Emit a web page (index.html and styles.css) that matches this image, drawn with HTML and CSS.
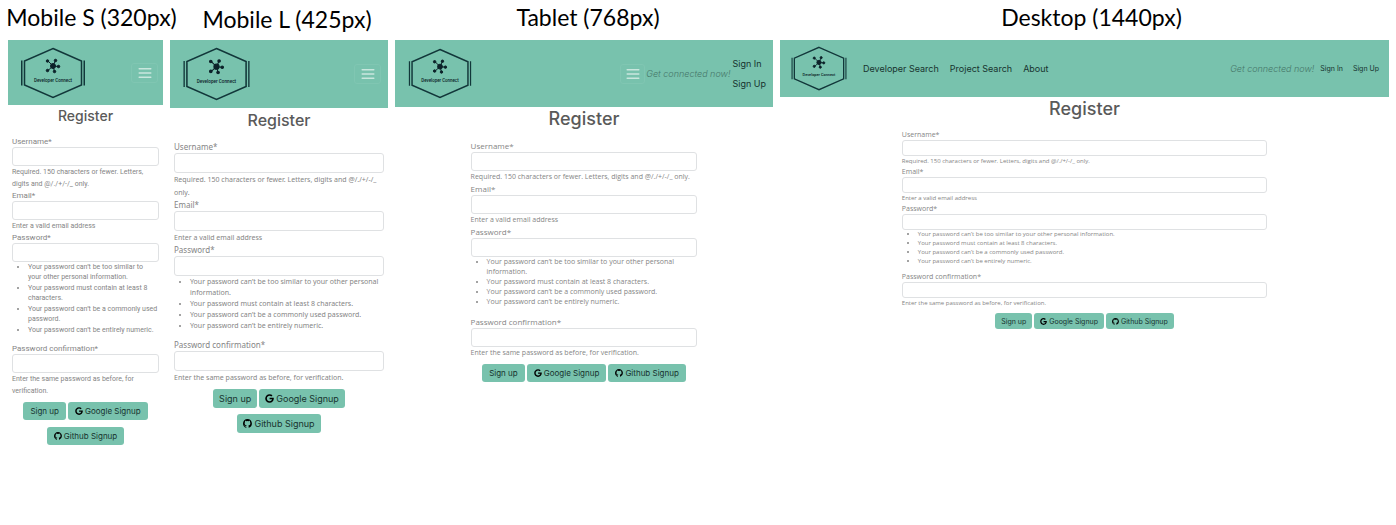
FILE: index.html
```html
<!DOCTYPE html>
<html lang="en">
<head>
<meta charset="utf-8">
<title>Developer Connect – Register</title>
<link rel="stylesheet" href="styles.css">
</head>
<body>
<svg class="defs" aria-hidden="true">
  <symbol id="logo" viewBox="0 0 128 104">
    <g fill="none" stroke="#12373a" stroke-width="3">
      <path d="M64 3 121 28V76L64 101 7 76V28Z"/>
      <path d="M1.500 27V77M126.500 27V77"/>
    </g>
    <g stroke="#0c2229" stroke-width="2" fill="#0c2229">
      <path d="M64 38 54 28M64 38 69 27M64 38 75 39M64 38 67 49M64 38 54 47"/>
      <circle cx="64" cy="38" r="5"/><circle cx="53" cy="28" r="2.500"/><circle cx="69" cy="27" r="2.500"/>
      <circle cx="75" cy="39" r="2.500"/><circle cx="67" cy="49" r="2.500"/><circle cx="53" cy="47" r="2.500"/>
    </g>
  </symbol>
  <symbol id="menu" viewBox="0 0 30 30">
    <path d="M4 7h22M4 15h22M4 23h22" fill="none" stroke="#fff" stroke-opacity=".6" stroke-width="2.500" stroke-linecap="round"/>
  </symbol>
  <symbol id="google" viewBox="0 0 488 512">
    <path d="M488 261.800C488 403.300 391.100 504 248 504 110.800 504 0 393.200 0 256S110.800 8 248 8c66.800 0 123 24.500 166.300 64.900l-67.500 64.900C258.500 52.600 94.300 116.600 94.300 256c0 86.500 69.100 156.600 153.700 156.600 98.200 0 135-70.400 140.800-106.900H248v-85.300h236.100c2.300 12.700 3.900 24.900 3.900 41.400z"/>
  </symbol>
  <symbol id="github" viewBox="0 0 16 16">
    <path d="M8 0C3.580 0 0 3.580 0 8c0 3.540 2.290 6.530 5.470 7.590.4.070.55-.17.55-.38v-1.600c-2.010.37-2.530-.49-2.690-.94-.09-.23-.48-.94-.82-1.130-.28-.15-.68-.52-.01-.53.63-.01 1.080.58 1.230.82.72 1.210 1.870.87 2.330.66.07-.52.28-.87.51-1.070-1.780-.2-3.640-.89-3.640-3.950 0-.87.31-1.590.82-2.150-.08-.2-.36-1.020.08-2.120 0 0 .67-.21 2.200.82a7.600 7.600 0 0 1 4 0c1.530-1.040 2.200-.82 2.200-.82.44 1.100.16 1.920.08 2.120.51.56.82 1.270.82 2.150 0 3.070-1.870 3.750-3.650 3.950.29.25.54.73.54 1.480v2.200c0 .21.15.46.55.38A8 8 0 0 0 8 0z"/>
  </symbol>
</svg>

<main class="board">
  <section class="view mobile-s">
    <h2 class="caption">Mobile S (320px)</h2>
    <nav class="nav">
      <a class="brand" href="#" aria-label="Developer Connect"><svg viewBox="0 0 128 104"><use href="#logo"/><text class="logo-text" x="64" y="70" text-anchor="middle">Developer Connect</text></svg></a>
      <button class="toggle" aria-label="Menu"><svg><use href="#menu"/></svg></button>
    </nav>
    <h1 class="title">Register</h1>
    <form class="form">
      <label for="s-user">Username*</label>
      <input id="s-user" type="text">
      <p>Required. 150 characters or fewer. Letters,<br>digits and @/./+/-/_ only.</p>
      <label for="s-mail">Email*</label>
      <input id="s-mail" type="email">
      <p>Enter a valid email address</p>
      <label for="s-pass">Password*</label>
      <input id="s-pass" type="password">
      <ul>
        <li>Your password can’t be too similar to<br>your other personal information.</li>
        <li>Your password must contain at least 8<br>characters.</li>
        <li>Your password can’t be a commonly used password.</li>
        <li>Your password can’t be entirely numeric.</li>
      </ul>
      <label for="s-conf">Password confirmation*</label>
      <input id="s-conf" type="password">
      <p>Enter the same password as before, for<br>verification.</p>
      <div class="actions">
        <button type="button">Sign up</button>
        <button type="button"><svg><use href="#google"/></svg>Google Signup</button>
        <button type="button"><svg><use href="#github"/></svg>Github Signup</button>
      </div>
    </form>
  </section>

  <section class="view mobile-l">
    <h2 class="caption">Mobile L (425px)</h2>
    <nav class="nav">
      <a class="brand" href="#" aria-label="Developer Connect"><svg viewBox="0 0 128 104"><use href="#logo"/><text class="logo-text" x="64" y="70" text-anchor="middle">Developer Connect</text></svg></a>
      <button class="toggle" aria-label="Menu"><svg><use href="#menu"/></svg></button>
    </nav>
    <h1 class="title">Register</h1>
    <form class="form">
      <label for="l-user">Username*</label>
      <input id="l-user" type="text">
      <p>Required. 150 characters or fewer. Letters, digits and @/./+/-/_ only.</p>
      <label for="l-mail">Email*</label>
      <input id="l-mail" type="email">
      <p>Enter a valid email address</p>
      <label for="l-pass">Password*</label>
      <input id="l-pass" type="password">
      <ul>
        <li>Your password can’t be too similar to your other personal information.</li>
        <li>Your password must contain at least 8 characters.</li>
        <li>Your password can’t be a commonly used password.</li>
        <li>Your password can’t be entirely numeric.</li>
      </ul>
      <label for="l-conf">Password confirmation*</label>
      <input id="l-conf" type="password">
      <p>Enter the same password as before, for verification.</p>
      <div class="actions">
        <button type="button">Sign up</button>
        <button type="button"><svg><use href="#google"/></svg>Google Signup</button>
        <button type="button"><svg><use href="#github"/></svg>Github Signup</button>
      </div>
    </form>
  </section>

  <section class="view tablet">
    <h2 class="caption">Tablet (768px)</h2>
    <nav class="nav">
      <a class="brand" href="#" aria-label="Developer Connect"><svg viewBox="0 0 128 104"><use href="#logo"/><text class="logo-text" x="64" y="70" text-anchor="middle">Developer Connect</text></svg></a>
      <button class="toggle" aria-label="Menu"><svg><use href="#menu"/></svg></button>
      <em class="tagline">Get connected now!</em>
      <div class="account"><a href="#">Sign In</a><a href="#">Sign Up</a></div>
    </nav>
    <h1 class="title">Register</h1>
    <form class="form">
      <label for="t-user">Username*</label>
      <input id="t-user" type="text">
      <p>Required. 150 characters or fewer. Letters, digits and @/./+/-/_ only.</p>
      <label for="t-mail">Email*</label>
      <input id="t-mail" type="email">
      <p>Enter a valid email address</p>
      <label for="t-pass">Password*</label>
      <input id="t-pass" type="password">
      <ul>
        <li>Your password can’t be too similar to your other personal information.</li>
        <li>Your password must contain at least 8 characters.</li>
        <li>Your password can’t be a commonly used password.</li>
        <li>Your password can’t be entirely numeric.</li>
      </ul>
      <label for="t-conf">Password confirmation*</label>
      <input id="t-conf" type="password">
      <p>Enter the same password as before, for verification.</p>
      <div class="actions">
        <button type="button">Sign up</button>
        <button type="button"><svg><use href="#google"/></svg>Google Signup</button>
        <button type="button"><svg><use href="#github"/></svg>Github Signup</button>
      </div>
    </form>
  </section>

  <section class="view desktop">
    <h2 class="caption">Desktop (1440px)</h2>
    <nav class="nav">
      <a class="brand" href="#" aria-label="Developer Connect"><svg viewBox="0 0 128 104"><use href="#logo"/><text class="logo-text" x="64" y="70" text-anchor="middle">Developer Connect</text></svg></a>
      <div class="links"><a href="#">Developer Search</a><a href="#">Project Search</a><a href="#">About</a></div>
      <em class="tagline">Get connected now!</em>
      <div class="account"><a href="#">Sign In</a><a href="#">Sign Up</a></div>
    </nav>
    <h1 class="title">Register</h1>
    <form class="form">
      <label for="d-user">Username*</label>
      <input id="d-user" type="text">
      <p>Required. 150 characters or fewer. Letters, digits and @/./+/-/_ only.</p>
      <label for="d-mail">Email*</label>
      <input id="d-mail" type="email">
      <p>Enter a valid email address</p>
      <label for="d-pass">Password*</label>
      <input id="d-pass" type="password">
      <ul>
        <li>Your password can’t be too similar to your other personal information.</li>
        <li>Your password must contain at least 8 characters.</li>
        <li>Your password can’t be a commonly used password.</li>
        <li>Your password can’t be entirely numeric.</li>
      </ul>
      <label for="d-conf">Password confirmation*</label>
      <input id="d-conf" type="password">
      <p>Enter the same password as before, for verification.</p>
      <div class="actions">
        <button type="button">Sign up</button>
        <button type="button"><svg><use href="#google"/></svg>Google Signup</button>
        <button type="button"><svg><use href="#github"/></svg>Github Signup</button>
      </div>
    </form>
  </section>
</main>
</body>
</html>
```
FILE: styles.css
```css
* { box-sizing: border-box; }
body { margin: 0; background: #fff; color: #858585; font-family: "Open Sans", sans-serif; }
h1, h2, p, ul { margin: 0; }
a { color: #17332d; text-decoration: none; }
.defs { position: absolute; width: 0; height: 0; }
.logo-text { font: 500 9px Roboto, sans-serif; fill: #0c2229; }

.board {
  display: grid;
  grid-template-columns: 155fr 218fr 378fr 609fr;
  gap: 7px;
  padding: 0 7px 0 8px;
}
.view { min-width: 0; }

.caption {
  height: 40px;
  color: #000;
  font: 400 23px/34px Lato, sans-serif;
  white-space: nowrap;
  display: flex;
  justify-content: center;
}

.nav {
  display: flex;
  align-items: center;
  height: var(--nav-h);
  padding: 0 5px 0 13px;
  background: #78c2ad;
  font-family: Inter, sans-serif;
  white-space: nowrap;
}
.brand { display: flex; margin-right: auto; }
.brand svg { width: var(--logo-w); height: var(--logo-h); }
.toggle {
  display: flex;
  align-items: center;
  justify-content: center;
  width: 27px;
  height: 20px;
  padding: 0;
  border: 1px solid #80c6b2;
  border-radius: 3px;
  background: none;
}
.toggle svg { width: 16px; height: 16px; }
.tagline { color: #47786b; font-weight: 300; }

.title {
  margin-top: 2px;
  color: #5a5a5a;
  font: 500 var(--title-size)/20px Inter, sans-serif;
  text-align: center;
}

.form {
  display: flex;
  flex-direction: column;
  width: var(--form-w);
  margin: var(--form-top) auto 0;
}
.form label { font-size: var(--label-size); line-height: var(--label-h); }
.form input {
  width: 100%;
  height: var(--input-h);
  padding: 0 4px;
  border: 1px solid #dfe1e3;
  border-radius: 3px;
  background: #fff;
  font: inherit;
  font-size: var(--label-size);
}
.form p { font-size: var(--help-size); line-height: var(--help-h); }
.form ul {
  margin-bottom: var(--list-gap);
  padding-left: 16px;
  font-size: var(--help-size);
  line-height: var(--item-h);
}

.actions {
  display: flex;
  flex-wrap: wrap;
  justify-content: center;
  gap: var(--row-gap) 2px;
  margin-top: 5px;
}
.actions button {
  display: flex;
  align-items: center;
  gap: 2px;
  height: var(--btn-h);
  padding: 0 var(--btn-pad);
  border: 0;
  border-radius: 3px;
  background: #78c2ad;
  color: #17332d;
  font: 400 var(--btn-size) Inter, sans-serif;
  white-space: nowrap;
}
.actions svg { width: var(--btn-size); height: var(--btn-size); fill: #000; overflow: visible; }

.mobile-s {
  --nav-h: 65px; --logo-w: 64px; --logo-h: 52px; --title-size: 14px;
  --form-w: calc(100% - 8px); --form-top: 10px;
  --label-size: 8px; --label-h: 11px; --input-h: 19px;
  --help-size: 7px; --help-h: 12px; --item-h: 10px; --list-gap: 7px;
  --btn-size: 8px; --btn-h: 18px; --btn-pad: 7px; --row-gap: 7px;
}
.mobile-s .form { font-family: Roboto, sans-serif; }
.mobile-s .caption { padding-left: 12px; }
.mobile-s .title { margin-top: 1px; }
.mobile-s li { margin-bottom: 1px; }

.mobile-l {
  --nav-h: 68px; --logo-w: 67px; --logo-h: 54px; --title-size: 16px;
  --form-w: calc(100% - 8px); --form-top: 11px;
  --label-size: 8px; --label-h: 12px; --input-h: 20px;
  --help-size: 7px; --help-h: 13px; --item-h: 11px; --list-gap: 8px;
  --btn-size: 9px; --btn-h: 19px; --btn-pad: 6px; --row-gap: 6px;
}
.mobile-l .form { font-family: "Noto Sans", sans-serif; }
.mobile-l .caption { padding-left: 16px; line-height: 38px; }
.mobile-l .nav { padding-right: 7px; }

.tablet {
  --nav-h: 67px; --logo-w: 64px; --logo-h: 51px; --title-size: 18px;
  --form-w: 60%; --form-top: 11px;
  --label-size: 8px; --label-h: 12px; --input-h: 19px;
  --help-size: 7px; --help-h: 12px; --item-h: 10px; --list-gap: 9px;
  --btn-size: 8px; --btn-h: 18px; --btn-pad: 7px; --row-gap: 6px;
}
.tablet .caption { padding-left: 8px; }
.tablet .nav { padding-right: 7px; font-size: 9px; }
.tablet .toggle { width: 25px; }
.tablet .tagline { margin: 0 2px 0 1px; }
.tablet .account { display: grid; line-height: 20px; }

.desktop {
  --nav-h: 57px; --logo-w: 56px; --logo-h: 45px; --title-size: 18px;
  --form-w: 60%; --form-top: 10px;
  --label-size: 7px; --label-h: 11px; --input-h: 16px;
  --help-size: 6px; --help-h: 10px; --item-h: 9px; --list-gap: 5px;
  --btn-size: 7px; --btn-h: 16px; --btn-pad: 6px; --row-gap: 6px;
}
.desktop .caption { padding-left: 14px; }
.desktop .nav { padding: 0 10px 0 11px; font-size: 9px; }
.desktop .brand { margin-right: 16px; }
.desktop .links { display: flex; gap: 11px; margin-right: auto; }
.desktop .account { display: flex; gap: 10px; margin-left: 6px; font-size: 7px; }
```
